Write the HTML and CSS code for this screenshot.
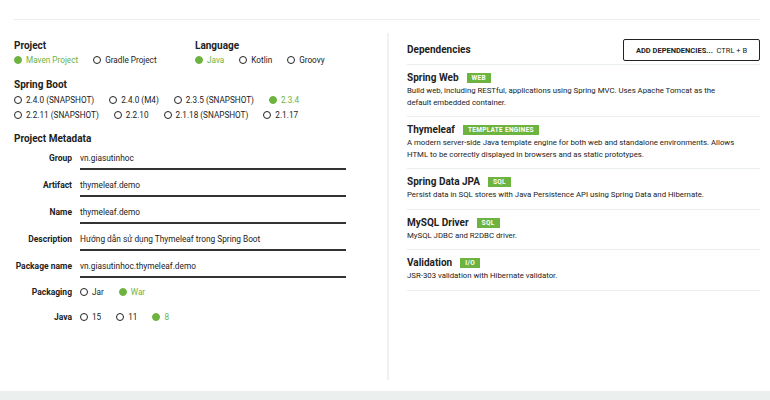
FILE: index.html
```html
<!DOCTYPE html>
<html lang="en">
<head>
  <meta charset="UTF-8">
  <meta name="viewport" content="width=device-width, initial-scale=1.0">
  <title>Spring Initializr</title>
  <link rel="stylesheet" href="styles.css">
</head>
<body>
  <div class="page">
    <div class="top-bar"></div>

    <div class="columns">
      <!-- left: project options -->
      <div class="col-left">
        <div class="group-row">
          <div class="group">
            <h2 class="section-title">Project</h2>
            <div class="radio-line">
              <span class="radio checked">Maven Project</span>
              <span class="radio">Gradle Project</span>
            </div>
          </div>
          <div class="group">
            <h2 class="section-title">Language</h2>
            <div class="radio-line">
              <span class="radio checked">Java</span>
              <span class="radio">Kotlin</span>
              <span class="radio">Groovy</span>
            </div>
          </div>
        </div>

        <div class="group boot">
          <h2 class="section-title">Spring Boot</h2>
          <div class="radio-line">
            <span class="radio">2.4.0 (SNAPSHOT)</span>
            <span class="radio">2.4.0 (M4)</span>
            <span class="radio">2.3.5 (SNAPSHOT)</span>
            <span class="radio checked">2.3.4</span>
          </div>
          <div class="radio-line">
            <span class="radio">2.2.11 (SNAPSHOT)</span>
            <span class="radio">2.2.10</span>
            <span class="radio">2.1.18 (SNAPSHOT)</span>
            <span class="radio">2.1.17</span>
          </div>
        </div>

        <div class="group meta">
          <h2 class="section-title">Project Metadata</h2>
          <div class="field">
            <label>Group</label>
            <div class="input">vn.giasutinhoc</div>
          </div>
          <div class="field">
            <label>Artifact</label>
            <div class="input">thymeleaf.demo</div>
          </div>
          <div class="field">
            <label>Name</label>
            <div class="input">thymeleaf.demo</div>
          </div>
          <div class="field">
            <label>Description</label>
            <div class="input">Hướng dẫn sử dụng Thymeleaf trong Spring Boot</div>
          </div>
          <div class="field">
            <label>Package name</label>
            <div class="input">vn.giasutinhoc.thymeleaf.demo</div>
          </div>
          <div class="field choice">
            <label>Packaging</label>
            <div class="radio-line">
              <span class="radio">Jar</span>
              <span class="radio checked">War</span>
            </div>
          </div>
          <div class="field choice">
            <label>Java</label>
            <div class="radio-line">
              <span class="radio">15</span>
              <span class="radio">11</span>
              <span class="radio checked">8</span>
            </div>
          </div>
        </div>
      </div>

      <!-- right: dependencies -->
      <div class="col-right">
        <div class="deps-head">
          <h2 class="section-title">Dependencies</h2>
          <button class="add-btn"><strong>ADD DEPENDENCIES...</strong>&nbsp; CTRL + B</button>
        </div>

        <div class="dep">
          <div class="dep-title">Spring Web <span class="badge">WEB</span></div>
          <p class="dep-desc">Build web, including RESTful, applications using Spring MVC. Uses Apache Tomcat as the default embedded container.</p>
        </div>
        <div class="dep">
          <div class="dep-title">Thymeleaf <span class="badge">TEMPLATE ENGINES</span></div>
          <p class="dep-desc">A modern server-side Java template engine for both web and standalone environments. Allows HTML to be correctly displayed in browsers and as static prototypes.</p>
        </div>
        <div class="dep">
          <div class="dep-title">Spring Data JPA <span class="badge">SQL</span></div>
          <p class="dep-desc">Persist data in SQL stores with Java Persistence API using Spring Data and Hibernate.</p>
        </div>
        <div class="dep">
          <div class="dep-title">MySQL Driver <span class="badge">SQL</span></div>
          <p class="dep-desc">MySQL JDBC and R2DBC driver.</p>
        </div>
        <div class="dep">
          <div class="dep-title">Validation <span class="badge">I/O</span></div>
          <p class="dep-desc">JSR-303 validation with Hibernate validator.</p>
        </div>
      </div>
    </div>

    <div class="footer"></div>
  </div>
</body>
</html>
```

FILE: styles.css
```css
body {
  margin: 0;
  font-family: Roboto, "Liberation Sans", sans-serif;
  color: #222;
  background: #fff;
}

.page {
  height: 100vh;
  display: flex;
  flex-direction: column;
}

.top-bar {
  height: 19px;
  margin: 0 10px 0 14px;
  border-bottom: 1px solid #e8eeee;
  flex-shrink: 0;
}

.columns {
  flex: 1;
  display: flex;
  margin: 13px 10px 11px 14px;
}

.col-left {
  width: 373px;
  padding-top: 7px;
  border-right: 2px solid #edf2f2;
}

.col-right {
  flex: 1;
  padding: 6px 0 0 18px;
}

.section-title {
  font-size: 10px;
  font-weight: 700;
  line-height: 12px;
  margin: 0;
}

.group-row {
  display: flex;
}

.group-row .group:first-child {
  width: 181px;
}

.radio-line {
  display: flex;
  font-size: 8.2px;
  line-height: 12px;
  margin-top: 2px;
}

.radio {
  display: flex;
  align-items: center;
  margin-right: 15px;
  white-space: nowrap;
}

.radio::before {
  content: "";
  width: 8px;
  height: 8px;
  box-sizing: border-box;
  border: 1.5px solid #222;
  border-radius: 50%;
  margin-right: 4px;
}

.radio.checked {
  color: #6db33f;
}

.radio.checked::before {
  background: #6db33f;
  border-color: #6db33f;
}

.boot {
  margin-top: 13px;
}

.boot .radio-line {
  margin-top: 3px;
}

.meta {
  margin-top: 12px;
}

.field {
  display: flex;
  align-items: flex-start;
  margin-top: 4px;
}

.field + .field {
  margin-top: 6px;
}

.field label {
  width: 58px;
  margin-right: 8px;
  text-align: right;
  font-size: 8.5px;
  font-weight: 700;
  line-height: 12px;
  padding-top: 3px;
  white-space: nowrap;
}

.input {
  width: 266px;
  font-size: 8.3px;
  line-height: 12px;
  padding: 3px 0 4px;
  border-bottom: 2px solid #333;
}

.field.choice {
  padding: 2px 0;
}

.field.choice label {
  padding-top: 0;
}

.field.choice .radio-line {
  margin-top: 0;
}

.field.choice + .field.choice {
  margin-top: 9px;
}

.deps-head {
  display: flex;
  justify-content: space-between;
  align-items: center;
  padding-bottom: 3px;
  border-bottom: 1px solid #e8eeee;
}

.add-btn {
  height: 22px;
  width: 137px;
  padding: 0;
  background: #fff;
  border: 1px solid #222;
  border-radius: 2px;
  font-family: inherit;
  font-size: 7.5px;
  color: #222;
  cursor: pointer;
}

.dep {
  padding: 7px 0 8px;
  border-bottom: 1px solid #e8eeee;
}

.dep-title {
  display: flex;
  align-items: center;
  font-size: 10px;
  font-weight: 700;
  line-height: 12px;
}

.badge {
  margin-left: 8px;
  background: #6db33f;
  color: #fff;
  font-size: 6.5px;
  font-weight: 700;
  line-height: 10px;
  padding: 0 5px;
  letter-spacing: 0.3px;
}

.dep-desc {
  margin: 1px 0 0;
  font-size: 7.8px;
  line-height: 11.5px;
  max-width: 334px;
}

.footer {
  height: 9px;
  background: #ebf0ef;
  flex-shrink: 0;
}
```
